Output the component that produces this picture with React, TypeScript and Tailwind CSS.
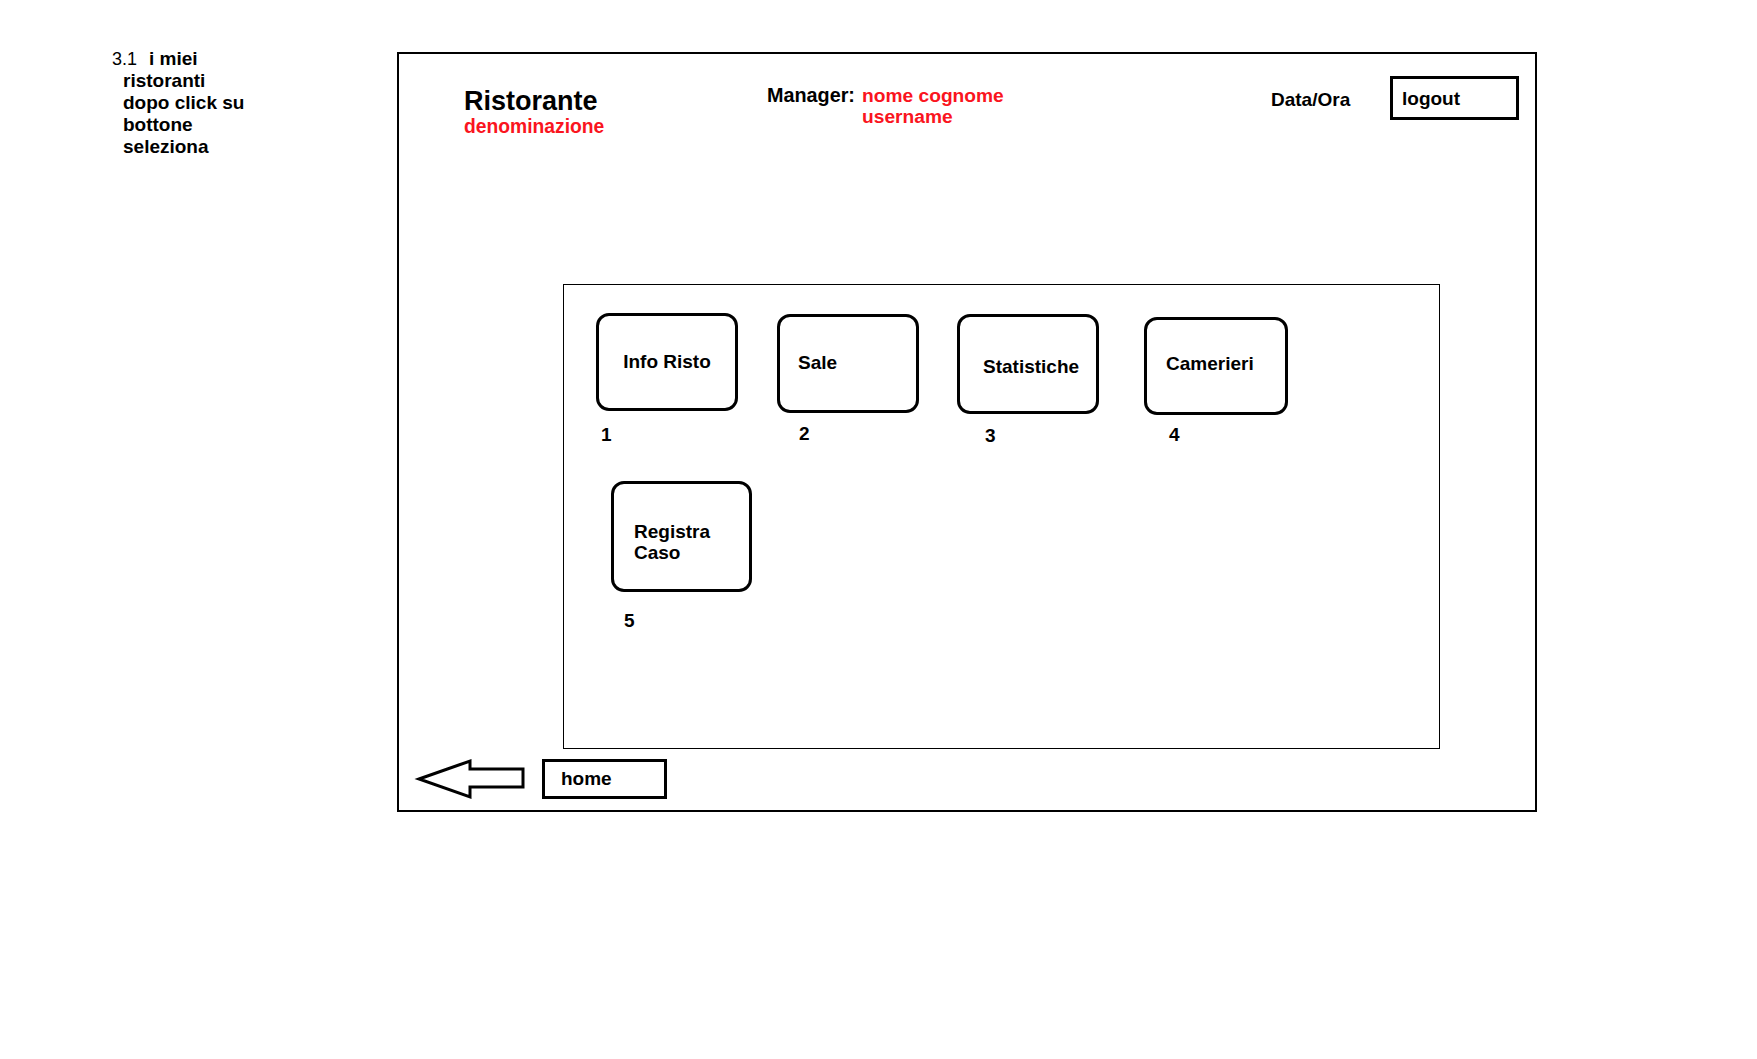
import React from "react";

const font = { fontFamily: '"Liberation Sans", Arial, sans-serif' };

function Card({
  label,
  num,
  cardClass,
  textClass,
  numClass,
}: {
  label: React.ReactNode;
  num: string;
  cardClass: string;
  textClass: string;
  numClass: string;
}) {
  return (
    <div className="flex flex-col items-start">
      <div
        className={`box-border border-[3px] border-black rounded-[13px] bg-white flex items-center ${cardClass}`}
      >
        <div className={`text-[19px] leading-[21px] font-bold text-black ${textClass}`}>{label}</div>
      </div>
      <div className={`text-[19px] leading-[22px] font-bold text-black ${numClass}`}>{num}</div>
    </div>
  );
}

export default function App() {
  return (
    <div
      className="w-[1757px] h-[1059px] bg-white flex items-start pt-[48px] pl-[112px] text-black"
      style={font}
    >
      {/* annotation */}
      <div className="w-[285px] shrink-0 leading-[22px]">
        <div className="flex items-baseline">
          <span className="text-[18px] font-normal">3.1</span>
          <span className="ml-[12px] text-[19px] font-bold">i miei</span>
        </div>
        <div className="pl-[11px] text-[19px] font-bold">ristoranti</div>
        <div className="pl-[11px] text-[19px] font-bold">dopo click su</div>
        <div className="pl-[11px] text-[19px] font-bold">bottone</div>
        <div className="pl-[11px] text-[19px] font-bold">seleziona</div>
      </div>

      {/* frame */}
      <div className="mt-[4px] box-border w-[1140px] h-[760px] border-2 border-black flex flex-col shrink-0">
        {/* header */}
        <div className="h-[230px] flex items-start shrink-0">
          <div className="ml-[65px] w-[303px] mt-[32px] shrink-0">
            <div className="text-[27px] leading-[30px] font-bold">Ristorante</div>
            <div className="text-[19.3px] leading-[22px] font-bold text-[#fa1420]">denominazione</div>
          </div>
          <div className="w-[504px] mt-[31px] flex items-start shrink-0 leading-[21px] font-bold">
            <div className="w-[95px] shrink-0 text-[19.8px]">Manager:</div>
            <div className="text-[#fa1420] text-[19.2px]">
              <div>nome cognome</div>
              <div>username</div>
            </div>
          </div>
          <div className="w-[119px] mt-[35px] shrink-0 text-[19px] leading-[22px] font-bold">Data/Ora</div>
          <div className="mt-[22px] box-border w-[129px] h-[44px] border-[3px] border-black flex items-center pl-[9px] pt-[1px] shrink-0 text-[19px] leading-[22px] font-bold">
            logout
          </div>
        </div>

        {/* inner box */}
        <div className="ml-[164px] box-border w-[877px] h-[465px] border border-black flex flex-col shrink-0">
          <div className="h-[196px] pt-[28px] pl-[32px] flex items-start shrink-0">
            <Card
              label="Info Risto"
              num="1"
              cardClass="w-[142px] h-[98px] justify-center pb-[1px]"
              textClass=""
              numClass="mt-[13px] ml-[5px]"
            />
            <div className="ml-[39px] mt-[1px]">
              <Card
                label="Sale"
                num="2"
                cardClass="w-[142px] h-[99px] pl-[18px] pb-[3px]"
                textClass=""
                numClass="mt-[10px] ml-[22px]"
              />
            </div>
            <div className="ml-[38px] mt-[1px]">
              <Card
                label="Statistiche"
                num="3"
                cardClass="w-[142px] h-[100px] pl-[23px] pt-[5px]"
                textClass=""
                numClass="mt-[11px] ml-[28px]"
              />
            </div>
            <div className="ml-[45px] mt-[4px]">
              <Card
                label="Camerieri"
                num="4"
                cardClass="w-[144px] h-[98px] pl-[19px] pb-[5px]"
                textClass=""
                numClass="mt-[9px] ml-[25px]"
              />
            </div>
          </div>
          <div className="pl-[47px] flex items-start">
            <Card
              label={
                <>
                  <div>Registra</div>
                  <div>Caso</div>
                </>
              }
              num="5"
              cardClass="w-[141px] h-[111px] pl-[20px] pt-[10px]"
              textClass=""
              numClass="mt-[18px] ml-[13px]"
            />
          </div>
        </div>

        {/* bottom row */}
        <div className="mt-[9px] flex items-center shrink-0">
          <svg
            className="ml-[15px] shrink-0"
            width="112"
            height="42"
            viewBox="0 0 112 42"
          >
            <polygon
              points="5,21 56,3 56,11 109,11 109,29 56,29 56,39"
              fill="white"
              stroke="black"
              strokeWidth="3"
              strokeLinejoin="miter"
              strokeMiterlimit="12"
            />
          </svg>
          <div className="ml-[16px] box-border w-[125px] h-[40px] border-[3px] border-black flex items-center pl-[16px] text-[19px] leading-[22px] font-bold shrink-0">
            home
          </div>
        </div>
      </div>
    </div>
  );
}
